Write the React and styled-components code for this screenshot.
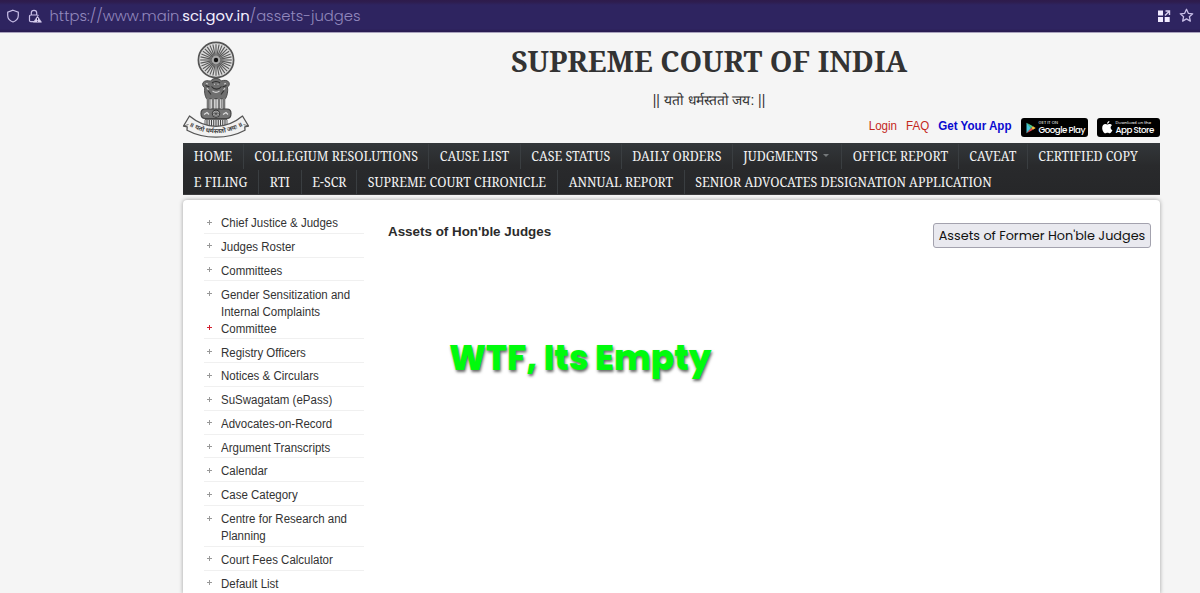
import React from 'react'
import styled, { createGlobalStyle } from 'styled-components';

const GlobalStyle = createGlobalStyle`
    * {
        box-sizing: border-box;
    }

    body {
        margin: 0;
        background: #f5f5f5;
        color: #333;
        font-family: "Liberation Sans", Arial, sans-serif;
        overflow: hidden;
    }
`

const menuTop = [
    { label: 'HOME', width: 60.5 },
    { label: 'COLLEGIUM RESOLUTIONS', width: 185.5 },
    { label: 'CAUSE LIST', width: 91.5 },
    { label: 'CASE STATUS', width: 101 },
    { label: 'DAILY ORDERS', width: 111 },
    { label: 'JUDGMENTS', width: 109.5, arrow: true },
    { label: 'OFFICE REPORT', width: 116.5 },
    { label: 'CAVEAT', width: 69 },
    { label: 'CERTIFIED COPY', width: 130, last: true },
]

const menuBottom = [
    { label: 'E FILING', width: 76 },
    { label: 'RTI', width: 42.5 },
    { label: 'E-SCR', width: 55.5 },
    { label: 'SUPREME COURT CHRONICLE', width: 201 },
    { label: 'ANNUAL REPORT', width: 126.5 },
    { label: 'SENIOR ADVOCATES DESIGNATION APPLICATION', width: 320, last: true },
]

const sideLinks = [
    { lines: ['Chief Justice & Judges'] },
    { lines: ['Judges Roster'] },
    { lines: ['Committees'] },
    { lines: ['Gender Sensitization and', 'Internal Complaints', 'Committee'], alert: true },
    { lines: ['Registry Officers'] },
    { lines: ['Notices & Circulars'] },
    { lines: ['SuSwagatam (ePass)'] },
    { lines: ['Advocates-on-Record'] },
    { lines: ['Argument Transcripts'] },
    { lines: ['Calendar'] },
    { lines: ['Case Category'] },
    { lines: ['Centre for Research and', 'Planning'] },
    { lines: ['Court Fees Calculator'] },
    { lines: ['Default List'] },
]

const spokes = Array.from({ length: 32 }, (_, i) => i * 11.25)

function Emblem() {
    return (
        <EmblemSvg viewBox="0 0 68 98">
            <circle cx="34" cy="19" r="17.6" fill="#dcdcdc" stroke="#555" strokeWidth="1.7" />
            {spokes.map((a) => (
                <path key={a} d="M34 15.5V3.2" stroke="#5a5a5a" strokeWidth="1.15" transform={`rotate(${a} 34 19)`} />
            ))}
            <circle cx="34" cy="19" r="4.4" fill="#a5a5a5" />
            <circle cx="34" cy="19" r="2.2" fill="#111" />

            <path d="M30 38.5c2.5-1.5 5.5-1.5 8 0l1.5 1.5c2.5-1.2 6.500-.8 7.500 1.500.8 2-.2 3.800-1.500 4.600.7 4-.3 8.600-2 11.600H24.500c-1.600-3-2.400-7-1.700-11-1.600-.8-2.800-3-1.800-5 1.400-2.300 5-2.300 7.500-1.500z" fill="#6f6f6f" stroke="#4a4a4a" strokeWidth="1" />
            <path d="M30 42c2-2 6-2 8 0M29.5 45.5c2.5 3.5 7.5 3.5 10 0M23.5 44.5l4 1.5M44.5 44.5l-4 1.5M26 49.5l3 4M42 49.5l-3 4" fill="none" stroke="#2f2f2f" strokeWidth="1.1" />
            <path d="M32 43.2h1M35.5 43.2h1M30.5 50c2 1.5 5 1.5 7 0M25 47l1.5 2M43 47l-1.5 2M24 42.5l2 .5M44 42.5l-2 .5" stroke="#d2d2d2" strokeWidth="1.1" fill="none" />
            <path d="M26 57v11M31 57v11M37 57v11M42 57v11" stroke="#777" strokeWidth="2.6" />
            <path d="M28 58v9M34 57v11M39.8 58v9" stroke="#3d3d3d" strokeWidth=".8" />

            <path d="M23 68h22c3 0 4 2 4 4.5s-1 5-4 5H23c-3 0-4-2.5-4-5s1-4.5 4-4.5z" fill="#757575" stroke="#444" strokeWidth="1.2" />
            <circle cx="34" cy="72.7" r="3.7" fill="#bbb" stroke="#333" />
            <path d="M34 69v7.4M30.3 72.7h7.4M31.4 70.1l5.2 5.2M36.6 70.1l-5.2 5.2" stroke="#444" strokeWidth=".7" />
            <path d="M22 73.5l3-2 2 2M41 73.5l3-2 2 2" fill="none" stroke="#ddd" strokeWidth="1.2" />
            <path d="M23 78.5h22v8H23z" fill="#eee" stroke="#444" strokeWidth=".8" />
            <path d="M25 79v7M27.25 79v7M29.5 79v7M31.75 79v7M34 79v7M36.25 79v7M38.5 79v7M40.75 79v7M43 79v7" stroke="#444" strokeWidth="1.1" />

            <path d="M7.5 75L1.5 85l3.7.8-.2 3.5C22 98.5 46 98.5 63 89.3l-.2-3.5 3.7-.8-6-10C44 88.8 24 88.8 7.5 75z" fill="#f1f1f1" stroke="#555" strokeWidth="1.3" strokeLinejoin="round" />
            <path d="M1.5 85l5-1.5M66.5 85l-5-1.5" stroke="#555" strokeWidth=".8" />
            <path id="motto" d="M6.5 84.5Q34 100 61.5 84.5" fill="none" />
            <text fontFamily='"Noto Sans", sans-serif' fontSize="6.4" fontWeight="700" fill="#444">
                <textPath href="#motto" startOffset="50%" textAnchor="middle">॥ यतो धर्मस्ततो जयः ॥</textPath>
            </text>
        </EmblemSvg>
    )
}

function App() {
    return (
        <Page>
            <GlobalStyle />

            <AddressBar>
                <BarIcon viewBox="0 0 14 14" $size={14}>
                    <path d="M7 1.2L12.3 3.1V6.5C12.3 9.6 10 11.9 7 13 4 11.9 1.7 9.6 1.7 6.5V3.1z" />
                </BarIcon>
                <BarIcon viewBox="0 0 14 14" $size={14} $gap={8}>
                    <path d="M3.3 6V4a2.7 2.7 0 0 1 5.4 0v2M6 12.7H2.8c-.8 0-1.3-.5-1.3-1.2V7.2C1.5 6.5 2 6 2.8 6h6.4c.7 0 1 .3 1.2.8" />
                    <path d="M9.5 7.2l4 6h-8z" fill="#d9d0ef" stroke="#d9d0ef" strokeWidth=".6" />
                    <path d="M9.5 9v2M9.5 11.8v.8" stroke="#2d2359" strokeWidth="1" />
                </BarIcon>
                <Url>https://www.main.<b>sci.gov.in</b>/assets-judges</Url>
                <BarIcon viewBox="0 0 14 14" $size={14}>
                    <path d="M1 1.5h5v5H1zM1 8h5v5H1zM7.7 8h5v5h-5z" fill="#f1ebff" stroke="none" />
                    <path d="M8 6.5l4.3-4.3M8.5 2h4v4" stroke="#d9d0ef" strokeWidth="1.4" />
                </BarIcon>
                <BarIcon viewBox="0 0 14 14" $size={15} $gap={8}>
                    <path d="M7 1.2l1.7 3.8 4.1.4-3.1 2.7.9 4.1L7 10.1l-3.6 2.1.9-4.1L1.2 5.4 5.3 5z" strokeLinejoin="round" />
                </BarIcon>
            </AddressBar>

            <Wrapper>
                <Header>
                    <Emblem />
                    <HeaderMain>
                        <Title>SUPREME COURT OF INDIA</Title>
                        <Motto>|| यतो धर्मस्ततो जय: ||</Motto>
                        <UserLinks>
                            <RedLink>Login</RedLink>
                            <RedLink>FAQ</RedLink>
                            <AppLink>Get Your App</AppLink>
                            <StoreBadge $width={66.5}>
                                <svg width="10" height="12" viewBox="0 0 10 12">
                                    <path d="M.5.7v10.6L5.3 6z" fill="#45c6d6" />
                                    <path d="M.5.7L5.3 6 7 4.3z" fill="#4fd08a" />
                                    <path d="M.5 11.3L5.3 6 7 7.7z" fill="#e64b50" />
                                    <path d="M7 4.3L9.7 6 7 7.7 5.3 6z" fill="#f5bd3e" />
                                </svg>
                                <StoreText><small>GET IT ON</small>Google Play</StoreText>
                            </StoreBadge>
                            <StoreBadge $width={63}>
                                <svg width="11" height="13" viewBox="0 0 11 13">
                                    <path d="M7.4 0c.1 1.4-1 2.7-2.3 2.7C5 1.4 6.1.2 7.4 0zM5.3 3.6c.6 0 1.3-.6 2.3-.6 1 0 1.9.5 2.4 1.3-2 1.2-1.7 4 .4 4.9-.6 1.5-1.6 3.1-2.7 3.1-.9 0-1.2-.5-2.2-.5s-1.4.5-2.2.5C1.7 12.3.2 9.4.2 7 .2 4.6 1.7 3.1 3.3 3.1c.9 0 1.5.5 2 .5z" fill="#fff" />
                                </svg>
                                <StoreText><small>Download on the</small>App Store</StoreText>
                            </StoreBadge>
                        </UserLinks>
                    </HeaderMain>
                </Header>

                <Nav>
                    {[menuTop, menuBottom].map((row, i) => (
                        <NavRow key={i}>
                            {row.map((item) => (
                                <NavItem key={item.label} $width={item.width} $last={item.last}>
                                    <span>{item.label}</span>
                                    {item.arrow && <Arrow />}
                                </NavItem>
                            ))}
                        </NavRow>
                    ))}
                </Nav>

                <Panel>
                    <SideMenu>
                        {sideLinks.map((link) => (
                            <SideItem key={link.lines[0]}>
                                <Marks>
                                    <Plus />
                                    {link.alert && <Plus $alert />}
                                </Marks>
                                <div>
                                    {link.lines.map((line) => <SideLine key={line}>{line}</SideLine>)}
                                </div>
                            </SideItem>
                        ))}
                    </SideMenu>
                    <Content>
                        <ContentTop>
                            <h2>Assets of Hon'ble Judges</h2>
                            <FormerButton>Assets of Former Hon'ble Judges</FormerButton>
                        </ContentTop>
                        <Remark>WTF, Its Empty</Remark>
                    </Content>
                </Panel>
            </Wrapper>
        </Page>
    )
}

export default App

const Page = styled.div`
    width: 1200px;
    height: 593px;
    display: flex;
    flex-direction: column;
    overflow: hidden;
`

const AddressBar = styled.div`
    height: 33px;
    flex: none;
    display: flex;
    align-items: center;
    padding: 0 6px 1px;
    background: linear-gradient(#2e1b4c 0, #2e1d4f 2px, #2e2460 5px, #2e2460 29px, #2a1c52 31px);
    border-bottom: 1px solid #a9a2bd;
`

const BarIcon = styled.svg`
    width: ${(p) => p.$size}px;
    height: ${(p) => p.$size}px;
    margin-left: ${(p) => p.$gap || 0}px;
    flex: none;
    fill: none;
    stroke: #c9bfe8;
    stroke-width: 1.2;
`

const Url = styled.div`
    flex: 1;
    margin-left: 7.5px;
    font-family: Poppins, Montserrat, sans-serif;
    font-size: 14.8px;
    font-weight: 300;
    line-height: 30px;
    color: #9288bd;

    b {
        font-weight: 400;
        color: #f4f0ff;
    }
`

const Wrapper = styled.div`
    width: 977px;
    margin-left: 183px;
    flex: 1;
    display: flex;
    flex-direction: column;
`

const Header = styled.div`
    height: 110px;
    flex: none;
    display: flex;
`

const EmblemSvg = styled.svg`
    width: 68px;
    height: 98px;
    margin: 8px 0 0 -1px;
    flex: none;
`

const HeaderMain = styled.div`
    flex: 1;
    display: flex;
    flex-direction: column;
`

const Title = styled.h1`
    margin: 8px 0 0 8px;
    text-align: center;
    font-family: "Noto Serif", serif;
    font-size: 28.75px;
    line-height: 40px;
    font-weight: 700;
    color: #333;
`

const Motto = styled.div`
    margin: 10px 0 0 8px;
    text-align: center;
    font-size: 13.8px;
    line-height: 20px;
`

const UserLinks = styled.div`
    display: flex;
    justify-content: flex-end;
    align-items: center;
    height: 20px;
    margin-top: 5px;
    font-size: 11.6px;
`

const RedLink = styled.a`
    margin: -2px 9px 0 0;
    color: #c4281c;
    transform: scaleY(1.06);
`

const AppLink = styled.a`
    margin-top: -2px;
    color: #0a0ad0;
    font-weight: 700;
    transform: scaleY(1.06);
`

const StoreBadge = styled.span`
    width: ${(p) => p.$width}px;
    height: 19px;
    margin: 3px 0 0 9.5px;
    display: flex;
    align-items: center;
    gap: 2.5px;
    padding-left: 5px;
    background: #000;
    border-radius: 3px;

    svg {
        flex: none;
    }
`

const StoreText = styled.span`
    display: flex;
    flex-direction: column;
    font-family: Poppins, Inter, sans-serif;
    font-size: 8.7px;
    line-height: 10px;
    letter-spacing: -0.5px;
    font-weight: 500;
    color: #fff;
    white-space: nowrap;

    small {
        font-size: 4.2px;
        line-height: 5px;
        letter-spacing: 0;
        font-weight: 400;
    }
`

const Nav = styled.nav`
    height: 52px;
    flex: none;
    padding-top: .5px;
    background: linear-gradient(#33373a, #292a2c 45%, #262729);
    border-bottom: 1px solid #3c3c3e;
`

const NavRow = styled.div`
    display: flex;
    height: 26px;
`

const NavItem = styled.a`
    width: ${(p) => p.$width}px;
    height: 25px;
    padding: 1px 0 0 10.8px;
    display: flex;
    align-items: center;
    border-right: ${(p) => (p.$last ? 'none' : '1px solid #3a3e41')};
    font-family: "Noto Serif", serif;
    font-size: 12.45px;
    color: #f3f3f3;
    white-space: nowrap;

    span {
        transform: scaleY(1.09);
    }
`

const Arrow = styled.i`
    margin: 0 0 2px 5px;
    border: 3.5px solid transparent;
    border-top-color: #74787a;
    border-bottom: 0;
`

const Panel = styled.div`
    flex: 1;
    min-height: 0;
    margin-top: 5px;
    display: flex;
    background: #fff;
    border-radius: 4px 4px 0 0;
    box-shadow: 0 0 4px rgba(0, 0, 0, .35);
`

const SideMenu = styled.div`
    width: 160px;
    margin: 10px 0 0 21px;
    flex: none;
`

const SideItem = styled.div`
    display: flex;
    padding: 5.2px 0 .55px;
    border-bottom: 1px solid #f0f0f0;
`

const Marks = styled.div`
    width: 17px;
    padding: 4.5px 0 0 3px;
    display: flex;
    flex-direction: column;
    gap: 28.5px;
`

const Plus = styled.i`
    width: 5px;
    height: 5px;
    background:
        linear-gradient(${(p) => (p.$alert ? '#d3202f, #d3202f' : '#999, #999')}) center / 5px 1px no-repeat,
        linear-gradient(${(p) => (p.$alert ? '#d3202f, #d3202f' : '#999, #999')}) center / 1px 5px no-repeat;
`

const SideLine = styled.div`
    font-size: 11.5px;
    line-height: 17.07px;
    white-space: nowrap;
    transform: scaleY(1.08);
`

const Content = styled.div`
    flex: 1;
    padding: 23px 9px 0 24px;
`

const ContentTop = styled.div`
    display: flex;
    justify-content: space-between;

    h2 {
        margin: 0;
        font-size: 13.4px;
        line-height: 17px;
        color: #2b2b2b;
    }
`

const FormerButton = styled.button`
    width: 218px;
    height: 25px;
    padding: 0;
    border: 1px solid #a3a2ae;
    border-radius: 3px;
    background: #e9e9ef;
    font-family: Poppins, sans-serif;
    font-size: 12.8px;
    line-height: 22px;
    color: #111;
    white-space: nowrap;
`

const Remark = styled.div`
    margin: 84px 0 0 61px;
    font-family: Poppins, sans-serif;
    font-size: 34.5px;
    line-height: 52px;
    font-weight: 800;
    color: #00fb0c;
    text-shadow: 1px 2px 3px rgba(0, 0, 0, .6);
`
